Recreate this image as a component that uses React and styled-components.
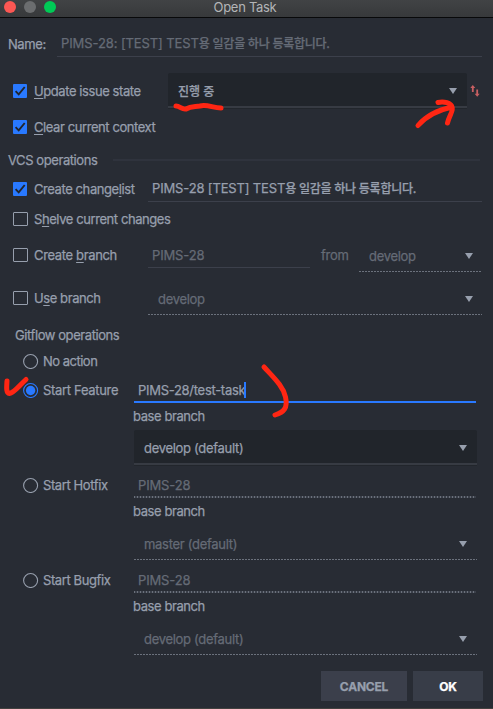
import React from "react";
import styled, { createGlobalStyle, css } from "styled-components";

const Global = createGlobalStyle`
  * { box-sizing: border-box; }
  body {
    margin: 0;
    background: #282c34;
    color: #979fad;
    font: 13px/16px Inter, "Noto Sans CJK KR", sans-serif;
    font-feature-settings: "calt" 0;
    -webkit-text-stroke: 0.25px currentColor;
  }
`;

const Dialog = styled.main`
  position: relative;
  width: 493px;
  height: 709px;
  background: #282c34;
  border-bottom: 1px solid #42413f;
  overflow: hidden;
  display: flex;
  flex-direction: column;
`;

const TitleBar = styled.header`
  height: 18px;
  flex: none;
  display: grid;
  grid-template-columns: 60px 1fr 63px;
  align-items: center;
  background: linear-gradient(#414345, #37393b);
  border-bottom: 1px solid #08090a;
`;
const Lights = styled.div`
  display: flex;
  gap: 8px;
  padding: 0 0 3px 4px;
`;
const Light = styled.span`
  width: 12px;
  height: 12px;
  border-radius: 50%;
  background: ${(p) => p.$color};
`;
const Title = styled.h1`
  margin: 0;
  padding-bottom: 2px;
  text-align: center;
  font-size: 13px;
  font-weight: 400;
  line-height: 15px;
  color: #b3b5b7;
  -webkit-text-stroke: 0;
`;

const Row = styled.div`
  height: ${(p) => p.$h}px;
  margin-top: ${(p) => p.$mt || 0}px;
  padding-left: ${(p) => p.$pl || 0}px;
  flex: none;
  display: flex;
  align-items: center;
`;

const Text = styled.span`
  letter-spacing: ${(p) => p.$ls ?? -0.42}px;
  white-space: pre;
  color: ${(p) => (p.$dim ? "#656b76" : "inherit")};
`;
const Korean = styled.span`
  font-size: 12px;
  font-weight: 500;
  letter-spacing: ${(p) => p.$ls ?? -0.25}px;
`;
const Key = styled.u`
  text-underline-offset: 2px;
  text-decoration-thickness: 1px;
  text-decoration-skip-ink: none;
`;

const NameLabel = styled.div`
  width: 49px;
`;

const dashed = css`
  background: repeating-linear-gradient(90deg, #6b717c 0 2px, #282c34 2px 3px) bottom / 100% 1px no-repeat;
`;
const dotted = css`
  background: repeating-linear-gradient(90deg, #6b717c 0 1px, #3a3f49 1px 3px) bottom / 100% 2px no-repeat;
`;
const blueLine = css`
  border-bottom: 2px solid #2979ff;
`;
const plainLine = css`
  border-bottom: 1px solid #3c404b;
`;
const lines = { dashed, dotted, blue: blueLine, plain: plainLine };

const Field = styled.div`
  width: ${(p) => p.$w}px;
  height: ${(p) => p.$h || 26}px;
  padding: ${(p) => p.$pt ?? 0}px 0 0 4px;
  display: flex;
  align-items: center;
  ${(p) => lines[p.$line || "plain"]}
`;
const Caret = styled.span`
  width: 2px;
  height: 16px;
  margin-left: -1px;
  background: #2979ff;
`;

const ComboBox = styled.div`
  width: ${(p) => p.$w}px;
  height: ${(p) => (p.$filled ? 35 : 34)}px;
  padding: ${(p) => (p.$filled ? 3 : 1)}px ${(p) => p.$pr || 9}px 0 10px;
  display: flex;
  align-items: center;
  justify-content: space-between;
  ${(p) =>
    p.$filled
      ? css`
          background: #21252b;
          border-bottom: 2px solid #373b43;
          border-radius: 2px 2px 0 0;
          box-shadow: 0 1px #22262c;
        `
      : dashed}
`;
const Arrow = () => (
  <svg width="8" height="6" viewBox="0 0 8 6">
    <path d="M0 0H8L4 6Z" fill="#979fad" />
  </svg>
);
const Combo = ({ label, ls = -0.3, ...rest }) => (
  <ComboBox {...rest}>
    <Text $dim={!rest.$filled} $ls={ls}>{label}</Text>
    <Arrow />
  </ComboBox>
);

const Box = styled.span`
  width: ${(p) => (p.$on ? 14 : 15)}px;
  height: 14px;
  margin-right: ${(p) => (p.$on ? 7 : 6)}px;
  flex: none;
  display: flex;
  border-radius: 1px;
  border: ${(p) => (p.$on ? 0 : "1px solid #979fad")};
  background: ${(p) => (p.$on ? "#2979ff" : "transparent")};
`;
const CheckLabel = styled.label`
  width: 148px;
  flex: none;
  padding-left: 13px;
  display: flex;
  align-items: center;
  white-space: nowrap;
`;
const Check = ({ on, ls, children }) => (
  <CheckLabel>
    <Box $on={on}>
      {on && (
        <svg width="14" height="14" viewBox="0 0 14 14">
          <path d="M2.6 7.2L5.7 10.3L11.7 3" fill="none" stroke="#21252b" strokeWidth="1.9" />
        </svg>
      )}
    </Box>
    <Text $ls={ls}>{children}</Text>
  </CheckLabel>
);

const Rule = styled.hr`
  width: 367px;
  height: 2px;
  margin: 0 0 0 auto;
  border: 0;
  background: #2f333d;
`;
const From = styled.span`
  width: 49px;
  padding-left: 11px;
`;
const SyncIcon = styled.svg`
  margin-left: 3px;
`;

const GitGroup = styled.section`
  display: grid;
  grid-template-columns: 111px 344px;
  grid-template-rows: 27px 22px 46px;
  padding-left: 23px;
  height: 95px;
  flex: none;
`;
const RadioLabel = styled.label`
  display: flex;
  align-items: center;
  gap: 4px;
  white-space: nowrap;
`;
const BaseLabel = styled.div`
  grid-column: 2;
  margin-left: -1px;
  padding-top: 5px;
`;
const ComboSlot = styled.div`
  grid-column: 2;
  padding-top: ${(p) => (p.$filled ? 5 : 6)}px;
`;
const Radio = ({ on }) => (
  <svg width="16" height="16" viewBox="0 0 16 16">
    <circle cx="7.6" cy="8.5" r="7" fill="none" stroke={on ? "#2979ff" : "#979fad"} strokeWidth="1.1" />
    {on && <circle cx="7.6" cy="8.5" r="4.7" fill="#2979ff" />}
  </svg>
);
const GitAction = ({ name, value, base, on, ls }) => (
  <GitGroup>
    <RadioLabel>
      <Radio on={on} />
      <Text $ls={ls}>{name}</Text>
    </RadioLabel>
    <Field $w={342} $h={27} $pt={on ? 3 : 1} $line={on ? "blue" : "dotted"}>
      <Text $dim={!on} $ls={on ? -0.29 : -0.15}>{value}</Text>
      {on && <Caret />}
    </Field>
    <BaseLabel><Text>base branch</Text></BaseLabel>
    <ComboSlot $filled={on}>
      <Combo $w={343} $pr={10} $filled={on} label={base} />
    </ComboSlot>
  </GitGroup>
);

const Buttons = styled.footer`
  margin-top: 10px;
  padding-right: 10px;
  display: flex;
  justify-content: flex-end;
  gap: 6px;
`;
const Button = styled.button`
  width: ${(p) => p.$w}px;
  height: 30px;
  padding: 2px 0 0;
  border: 0;
  background: ${(p) => (p.$primary ? "#383d48" : "#3b3f4b")};
  color: ${(p) => (p.$primary ? "#fff" : "#979fad")};
  font: 700 12px/16px Inter, sans-serif;
  letter-spacing: -0.2px;
`;

const Marks = styled.svg`
  position: absolute;
  inset: 0;
  pointer-events: none;
`;

export default function App() {
  return (
    <Dialog>
      <Global />
      <TitleBar>
        <Lights>
          <Light $color="#fc5753" />
          <Light $color="#6b6d6f" />
          <Light $color="#00ca56" />
        </Lights>
        <Title><Text $ls={-0.3}>Open Task</Text></Title>
      </TitleBar>

      <Row $h={26} $mt={13} $pl={8}>
        <NameLabel><Text>Name:</Text></NameLabel>
        <Field $w={425}>
          <Text $dim $ls={-0.1}>PIMS-28: [TEST] TEST<Korean>용 일감을 하나 등록합니다.</Korean></Text>
        </Field>
      </Row>
      <Row $h={35} $mt={16}>
        <Check on><Key>U</Key>pdate issue state</Check>
        <Row $h={35} $pl={20}>
          <Combo $w={299} $pr={10} $filled label={<Korean $ls={0}>진행 중</Korean>} />
          <SyncIcon width="10" height="13" viewBox="0 0 10 13">
            <path d="M2.800 8V3M7.200 5.500V10.500" fill="none" stroke="#c75f62" strokeWidth="1.8" />
            <path d="M0.300 4L2.800 1L5.300 4ZM4.700 9.800L7.200 12.800L9.700 9.800Z" fill="#c75f62" />
          </SyncIcon>
        </Row>
      </Row>
      <Row $h={36} $mt={1}><Check on><Key>C</Key>lear current context</Check></Row>
      <Row $h={30} $pl={8}>
        <Text>VCS operations</Text>
        <Rule />
        <Row $h={1} $pl={13} />
      </Row>
      <Row $h={26} $mt={1}>
        <Check on>Create change<Key>l</Key>ist</Check>
        <Field $w={334}>
          <Text $ls={-0.15}>PIMS-28 [TEST] TEST<Korean>용 일감을 하나 등록합니다.</Korean></Text>
        </Field>
      </Row>
      <Row $h={30} $mt={2}><Check>S<Key>h</Key>elve current changes</Check></Row>
      <Row $h={34} $mt={4}>
        <Check ls={-0.35}>Create <Key>b</Key>ranch</Check>
        <Field $w={162}><Text $dim $ls={-0.15}>PIMS-28</Text></Field>
        <From><Text $dim $ls={-0.3}>from</Text></From>
        <Combo $w={122} $pr={8} label="develop" />
      </Row>
      <Row $h={34} $mt={9}>
        <Check>U<Key>s</Key>e branch</Check>
        <Combo $w={334} $pr={9} label="develop" />
      </Row>
      <Row $h={20} $mt={10} $pl={15}><Text>Gitflow operations</Text></Row>
      <Row $h={31} $pl={23}>
        <RadioLabel><Radio /><Text $ls={-0.5}>No action</Text></RadioLabel>
      </Row>
      <GitAction on ls={-0.32} name="Start Feature" value="PIMS-28/test-task" base="develop (default)" />
      <GitAction name="Start Hotfix" ls={-0.4} value="PIMS-28" base="master (default)" />
      <GitAction name="Start Bugfix" ls={-0.4} value="PIMS-28" base="develop (default)" />

      <Buttons>
        <Button $w={86}>CANCEL</Button>
        <Button $w={70} $primary>OK</Button>
      </Buttons>

      <Marks width="493" height="709" fill="none" stroke="#ff2613" strokeWidth="5" strokeLinecap="round" strokeLinejoin="round">
        <path d="M176 106C180 106 182 110 186 109C191 106 195 107 200 106C207 104 213 108 221 108" />
        <path d="M418 125.500C426 116 438 110 452 107M438 102.500C444 101 451 103 452 107C454 110 449 116 447.500 123" />
        <path d="M264 367C274 378 283 386 285.500 397C288 408 284 412 275 415" />
        <path d="M7 381C6.500 388 6 393 9.500 393.500C14 393 18 387 26 379.500" />
      </Marks>
    </Dialog>
  );
}
